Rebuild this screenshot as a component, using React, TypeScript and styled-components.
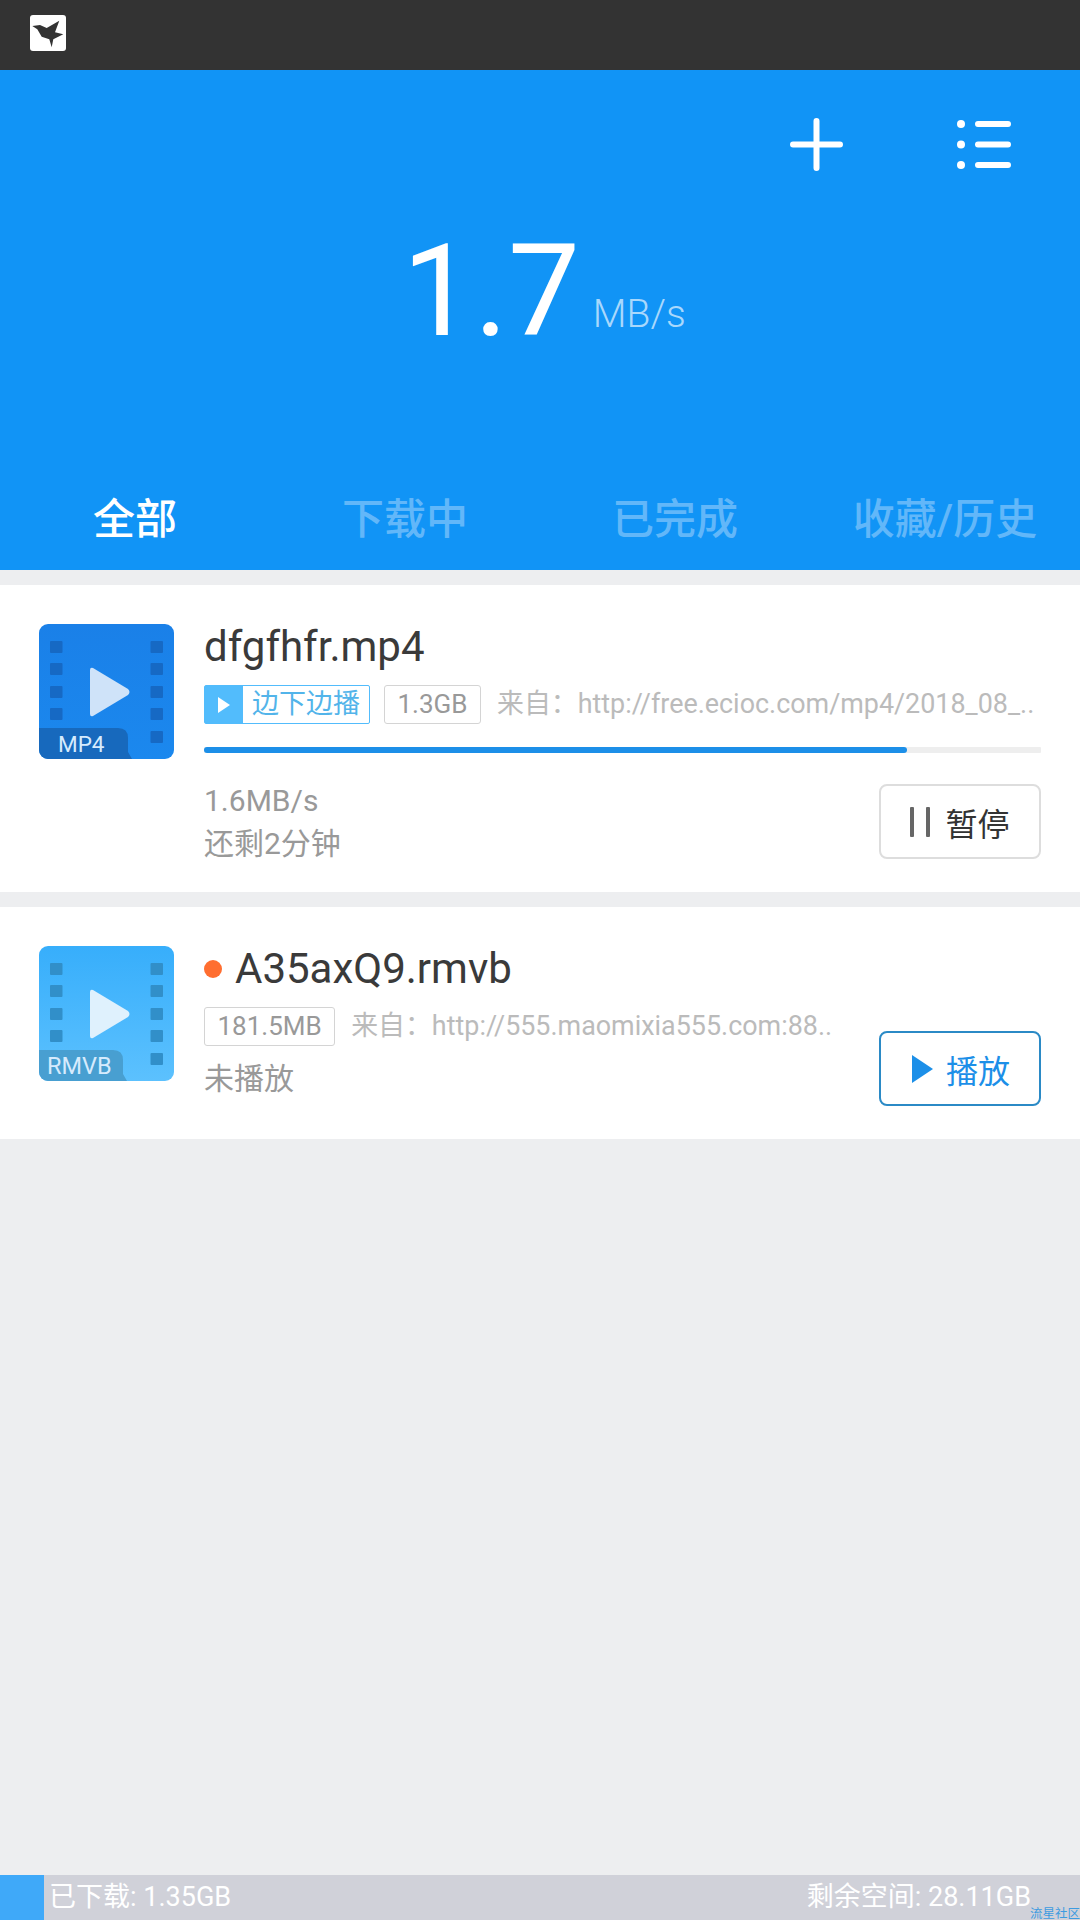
import * as React from 'react'
import styled, { createGlobalStyle } from 'styled-components'

const GlobalStyle = createGlobalStyle`
  html, body {
    margin: 0;
    padding: 0;
    background: #edeef0;
  }
  * {
    box-sizing: border-box;
  }
`

const Page = styled.div`
  width: 1080px;
  height: 1920px;
  display: flex;
  flex-direction: column;
  overflow: hidden;
  background: #edeef0;
  font-family: Roboto, 'Noto Sans CJK SC', sans-serif;
`

const StatusBar = styled.div`
  height: 70px;
  flex: none;
  display: flex;
  align-items: center;
  padding: 0 0 4px 30px;
  background: #333333;
`

const AppBadge = styled.div`
  width: 36px;
  height: 36px;
  display: flex;
  border-radius: 3px;
  background: #ffffff;
`

const Header = styled.header`
  height: 500px;
  flex: none;
  display: flex;
  flex-direction: column;
  background: #1194f6;
`

const Actions = styled.div`
  display: flex;
  justify-content: flex-end;
  gap: 114px;
  padding: 48px 69px 0 0;
`

const Speed = styled.div`
  display: flex;
  align-items: flex-end;
  justify-content: center;
  margin-top: 45px;
  padding-left: 8px;
  color: #ffffff;
`

const SpeedValue = styled.span`
  font-size: 128px;
  line-height: 150px;
  font-weight: 400;
`

const SpeedUnit = styled.span`
  margin: 0 0 29px 13px;
  font-size: 39px;
  line-height: 46px;
  font-weight: 300;
  color: #a9d8fc;
`

const Tabs = styled.nav`
  margin-top: auto;
  padding-bottom: 22px;
  display: grid;
  grid-template-columns: repeat(4, 270px);
`

const Tab = styled.div<{ $active?: boolean }>`
  text-align: center;
  font-size: 42px;
  line-height: 56px;
  font-weight: 500;
  color: ${(p) => (p.$active ? '#ffffff' : '#62b7f9')};
  white-space: nowrap;
`

const List = styled.main`
  flex: 1;
  display: flex;
  flex-direction: column;
  gap: 15px;
  padding-top: 15px;
`

const Card = styled.article<{ $height: number }>`
  height: ${(p) => p.$height}px;
  display: flex;
  gap: 30px;
  padding: 39px 39px 0 39px;
  background: #ffffff;
`

const Thumb = styled.div`
  position: relative;
  width: 135px;
  height: 135px;
  flex: none;
`

const ThumbLabel = styled.span<{ $left: number; $size: number }>`
  position: absolute;
  left: ${(p) => p.$left}px;
  bottom: 0;
  font-size: ${(p) => p.$size}px;
  line-height: 30px;
  color: #d6ebfd;
`

const Body = styled.div`
  flex: 1;
  min-width: 0;
`

const Title = styled.div`
  display: flex;
  align-items: center;
  gap: 13px;
  height: 46px;
  font-size: 42px;
  line-height: 46px;
  color: #3a3a3a;
`

const Dot = styled.span`
  width: 18px;
  height: 18px;
  border-radius: 50%;
  background: #ff6e30;
`

const MetaRow = styled.div`
  display: flex;
  align-items: center;
  margin-top: 15px;
  white-space: nowrap;
`

const StreamTag = styled.div`
  height: 39px;
  display: flex;
  align-items: stretch;
  margin-right: 14px;
  border: 1px solid #52bcfc;
  border-radius: 2px;
  font-size: 27px;
  line-height: 37px;
  color: #52b4ea;
`

const StreamIcon = styled.span`
  width: 38px;
  display: flex;
  align-items: center;
  justify-content: center;
  background: #52bcfc;
`

const StreamText = styled.span`
  padding: 0 9px;
`

const SizeTag = styled.div`
  height: 39px;
  padding: 0 12.5px;
  border: 1px solid #d4d4d4;
  border-radius: 3px;
  font-size: 26px;
  line-height: 37px;
  color: #999999;
`

const Source = styled.span`
  margin-left: 16px;
  font-size: 26.9px;
  line-height: 39px;
  color: #bbbbbb;
`

const Track = styled.div`
  height: 6px;
  margin-top: 23px;
  border-radius: 1px;
  background: #eeeeee;
`

const Fill = styled.div`
  height: 100%;
  border-radius: 3px;
  background: #1c8fe8;
`

const Footer = styled.div`
  display: flex;
  align-items: flex-start;
  justify-content: space-between;
  margin-top: 31px;
`

const Stats = styled.div<{ $top: number }>`
  margin-top: ${(p) => p.$top}px;
  font-size: 30px;
  line-height: 43px;
  color: #999999;
`

const ActionButton = styled.button<{ $primary?: boolean; $top?: number }>`
  width: 162px;
  height: 75px;
  flex: none;
  display: flex;
  align-items: center;
  justify-content: center;
  gap: ${(p) => (p.$primary ? 13 : 15)}px;
  margin-top: ${(p) => p.$top ?? 0}px;
  padding: 0 0 0 ${(p) => (p.$primary ? 2 : 0)}px;
  border: 2px solid ${(p) => (p.$primary ? '#2b8ac6' : '#dddddd')};
  border-radius: 8px;
  background: #ffffff;
  font-family: inherit;
  font-size: 32px;
  color: ${(p) => (p.$primary ? '#1c8fe8' : '#333333')};
`

const SecondRow = styled.div`
  display: flex;
  align-items: flex-start;
  justify-content: space-between;
`

const BottomBar = styled.footer`
  position: relative;
  height: 45px;
  flex: none;
  display: flex;
  justify-content: space-between;
  padding-right: 49px;
  background: #d0d1d9;
  font-size: 27px;
  line-height: 45px;
  color: #ffffff;
`

const Used = styled.div`
  width: 44px;
  background: #3fa9f9;
`

const UsedText = styled.span`
  flex: 1;
  margin-left: 5px;
`

const Watermark = styled.span`
  position: absolute;
  right: 0;
  bottom: 0;
  font-size: 12.5px;
  line-height: 13px;
  color: #3d9be0;
`

const BirdIcon = () => (
  <svg width='36' height='36' viewBox='0 0 36 36'>
    <path
      fill='#333333'
      d='M2.3 11 L10 10 L16.7 13 L29.3 5.7 L25 17.3 L33.3 19.3 L23.3 24.3 L21.7 32.3 L19.3 24.3 L11.7 21.7 L7.3 14.3 Z'
    />
  </svg>
)

const PlusIcon = () => (
  <svg width='53' height='53' viewBox='0 0 53 53'>
    <path d='M26.5 3v47M3 26.5h47' stroke='#fff' strokeWidth='6' strokeLinecap='round' />
  </svg>
)

const MenuIcon = () => (
  <svg width='54' height='53' viewBox='0 0 54 53'>
    <g fill='#fff'>
      <circle cx='4' cy='6' r='4' />
      <circle cx='4' cy='26.5' r='4' />
      <circle cx='4' cy='47' r='4' />
    </g>
    <path d='M21 6h30M21 26.5h30M21 47h30' stroke='#fff' strokeWidth='6' strokeLinecap='round' />
  </svg>
)

const SmallPlay = ({ size, color }: { size: number; color: string }) => (
  <svg width={size * 0.75} height={size} viewBox='0 0 15 20'>
    <path d='M0 0 L15 10 L0 20 Z' fill={color} />
  </svg>
)

const PauseIcon = () => (
  <svg width='20' height='30' viewBox='0 0 20 30'>
    <rect x='0' width='4' height='30' rx='1' fill='#666666' />
    <rect x='16' width='4' height='30' rx='1' fill='#666666' />
  </svg>
)

const holeRows = [17, 39, 62, 84]

const VideoArt = (props: { id: string; from: string; to: string; hole: string; tab: string; tabWidth: number; play: string }) => (
  <svg width='135' height='135' viewBox='0 0 135 135'>
    <defs>
      <linearGradient id={props.id} x1='0' y1='0' x2='0' y2='1'>
        <stop offset='0' stopColor={props.from} />
        <stop offset='1' stopColor={props.to} />
      </linearGradient>
      <clipPath id={props.id + '-clip'}>
        <rect width='135' height='135' rx='9' />
      </clipPath>
    </defs>
    <g clipPath={`url(#${props.id}-clip)`}>
      <rect width='135' height='135' fill={`url(#${props.id})`} />
      {holeRows.map((y) => (
        <rect key={y} x='11' y={y} width='12.5' height='12' rx='1' fill={props.hole} />
      ))}
      {[...holeRows, 107].map((y) => (
        <rect key={y} x='111.5' y={y} width='12.5' height='12' rx='1' fill={props.hole} />
      ))}
      <path
        d={`M0 104 H${props.tabWidth - 10} Q${props.tabWidth} 104 ${props.tabWidth} 114 V128 L${props.tabWidth + 4} 135 H0 Z`}
        fill={props.tab}
      />
    </g>
    <path d='M54 44 L89 65 Q92 68 89 71 L54 92 Q51 93 51 90 V46 Q51 43 54 44 Z' fill={props.play} />
  </svg>
)

export default function App() {
  return (
    <Page>
      <GlobalStyle />
      <StatusBar>
        <AppBadge>
          <BirdIcon />
        </AppBadge>
      </StatusBar>
      <Header>
        <Actions>
          <PlusIcon />
          <MenuIcon />
        </Actions>
        <Speed>
          <SpeedValue>1.7</SpeedValue>
          <SpeedUnit>MB/s</SpeedUnit>
        </Speed>
        <Tabs>
          <Tab $active>全部</Tab>
          <Tab>下载中</Tab>
          <Tab>已完成</Tab>
          <Tab>收藏/历史</Tab>
        </Tabs>
      </Header>
      <List>
        <Card $height={307}>
          <Thumb>
            <VideoArt id='mp4' from='#1a80e8' to='#1b88ee' hole='#1669c4' tab='#1769bd' tabWidth={89} play='#cfe3f9' />
            <ThumbLabel $left={19} $size={22.5}>MP4</ThumbLabel>
          </Thumb>
          <Body>
            <Title>dfgfhfr.mp4</Title>
            <MetaRow>
              <StreamTag>
                <StreamIcon>
                  <SmallPlay size={16} color='#ffffff' />
                </StreamIcon>
                <StreamText>边下边播</StreamText>
              </StreamTag>
              <SizeTag>1.3GB</SizeTag>
              <Source>来自：http://free.ecioc.com/mp4/2018_08_..</Source>
            </MetaRow>
            <Track>
              <Fill style={{ width: `${(703 / 837) * 100}%` }} />
            </Track>
            <Footer>
              <Stats $top={-5}>
                1.6MB/s
                <br />
                还剩2分钟
              </Stats>
              <ActionButton>
                <PauseIcon />
                暂停
              </ActionButton>
            </Footer>
          </Body>
        </Card>
        <Card $height={232}>
          <Thumb>
            <VideoArt id='rmvb' from='#37aefb' to='#5cc1fe' hole='#318fc9' tab='#489fd1' tabWidth={84} play='#dff1fd' />
            <ThumbLabel $left={8} $size={23.5}>RMVB</ThumbLabel>
          </Thumb>
          <Body>
            <Title>
              <Dot />
              A35axQ9.rmvb
            </Title>
            <SecondRow>
              <div>
                <MetaRow>
                  <SizeTag>181.5MB</SizeTag>
                  <Source>来自：http://555.maomixia555.com:88..</Source>
                </MetaRow>
                <Stats $top={11}>未播放</Stats>
              </div>
              <ActionButton $primary $top={39}>
                <SmallPlay size={28} color='#1c8fe8' />
                播放
              </ActionButton>
            </SecondRow>
          </Body>
        </Card>
      </List>
      <BottomBar>
        <Used />
        <UsedText>已下载: 1.35GB</UsedText>
        <span>剩余空间: 28.11GB</span>
        <Watermark>流星社区</Watermark>
      </BottomBar>
    </Page>
  )
}
